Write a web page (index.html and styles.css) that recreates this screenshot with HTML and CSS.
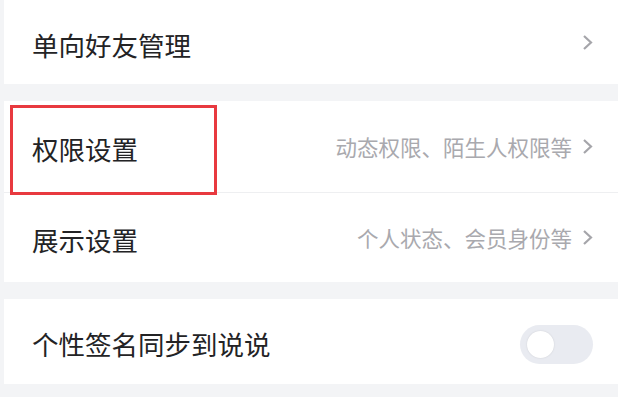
FILE: index.html
```html
<!DOCTYPE html>
<html lang="zh-CN">
<head>
    <meta charset="UTF-8">
    <meta name="viewport" content="width=device-width, initial-scale=1.0">
    <title>设置</title>
    <link rel="stylesheet" href="styles.css">
</head>
<body>
    <div class="settings">
        <div class="group">
            <div class="row row-first">
                <span class="label">单向好友管理</span>
                <span class="more">
                    <svg class="chevron" width="11" height="17" viewBox="0 0 11 17"><polyline points="2,2 9,8.5 2,15" fill="none" stroke="#a5a5aa" stroke-width="2.2"/></svg>
                </span>
            </div>
        </div>

        <div class="group">
            <div class="row row-perm">
                <span class="label">权限设置</span>
                <span class="more">
                    <span class="hint">动态权限、陌生人权限等</span>
                    <svg class="chevron" width="11" height="17" viewBox="0 0 11 17"><polyline points="2,2 9,8.5 2,15" fill="none" stroke="#a5a5aa" stroke-width="2.2"/></svg>
                </span>
                <div class="highlight"></div>
            </div>
            <div class="row row-show">
                <span class="label">展示设置</span>
                <span class="more">
                    <span class="hint">个人状态、会员身份等</span>
                    <svg class="chevron" width="11" height="17" viewBox="0 0 11 17"><polyline points="2,2 9,8.5 2,15" fill="none" stroke="#a5a5aa" stroke-width="2.2"/></svg>
                </span>
            </div>
        </div>

        <div class="group">
            <div class="row row-sign">
                <span class="label">个性签名同步到说说</span>
                <span class="switch"><span class="knob"></span></span>
            </div>
        </div>
    </div>
</body>
</html>
```

FILE: styles.css
```css
body {
    margin: 0;
    background: #ffffff;
    font-family: "Noto Sans CJK SC", "Noto Sans", sans-serif;
}
.settings {
    width: 614px;
    padding-left: 4px;
    padding-bottom: 13px;
    background: #f3f4f6;
    display: flex;
    flex-direction: column;
    gap: 17px;
}
.group {
    background: #ffffff;
}
.row {
    position: relative;
    display: flex;
    align-items: center;
    justify-content: space-between;
    padding: 0 25px 0 28px;
}
.row-first {
    height: 84px;
}
.row-perm {
    height: 91px;
    border-bottom: 1px solid #eeeff1;
}
.row-show {
    height: 89px;
}
.row-sign {
    height: 85px;
}
.label {
    font-size: 26.5px;
    color: #232325;
    padding-top: 4px;
}
.more {
    display: flex;
    align-items: center;
    gap: 10px;
}
.hint {
    font-size: 21.5px;
    color: #a9a9ae;
}
.chevron {
    display: block;
}
.switch {
    width: 73px;
    height: 39px;
    border-radius: 20px;
    background: #e9ebf1;
    display: flex;
    align-items: center;
    padding-left: 7px;
    box-sizing: border-box;
    margin-top: 6px;
}
.knob {
    width: 27px;
    height: 27px;
    border-radius: 50%;
    background: #ffffff;
    box-shadow: 0 0 2px rgba(0, 0, 0, 0.12);
}
.highlight {
    position: absolute;
    left: 6px;
    top: 4px;
    width: 201px;
    height: 84px;
    border: 3px solid #e8393f;
}
```
